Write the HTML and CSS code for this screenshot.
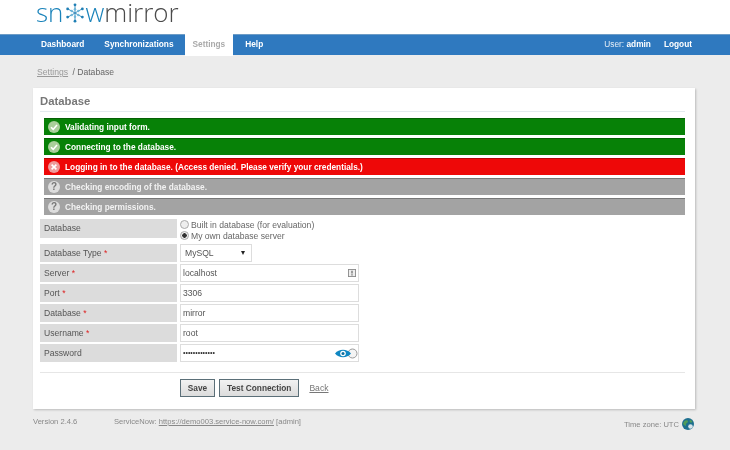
FILE: index.html
```html
<!DOCTYPE html>
<html lang="en">
<head>
<meta charset="utf-8">
<title>Snow Mirror - Database</title>
<link rel="stylesheet" href="styles.css">
</head>
<body>
<header class="brand">
  <div class="logo"><span class="logo-blue">sn</span><svg class="flake" width="18" height="20" viewBox="0 0 22 24"><g stroke="#2d86b8" stroke-width="1.1" fill="none"><path d="M11 1V23M1.5 6.5L20.5 17.5M20.5 6.5L1.5 17.5"/></g><g fill="#1f7fb5"><circle cx="11" cy="2" r="1.7"/><circle cx="11" cy="22" r="1.7"/><circle cx="2" cy="7" r="1.7"/><circle cx="20" cy="7" r="1.7"/><circle cx="2" cy="17" r="1.7"/><circle cx="20" cy="17" r="1.7"/></g><g fill="#6fb6d8"><circle cx="11" cy="7.5" r="1.5"/><circle cx="11" cy="16.5" r="1.5"/><circle cx="7" cy="9.5" r="1.5"/><circle cx="15" cy="9.5" r="1.5"/><circle cx="7" cy="14.5" r="1.5"/><circle cx="15" cy="14.5" r="1.5"/></g></svg><span class="logo-blue">w</span><span class="logo-grey">mirror</span></div>
</header>
<nav class="nav">
  <ul class="nav-left">
    <li><a class="nav-item">Dashboard</a></li>
    <li><a class="nav-item">Synchronizations</a></li>
    <li><a class="nav-item active">Settings</a></li>
    <li><a class="nav-item">Help</a></li>
  </ul>
  <div class="nav-right">
    <span class="user">User: <b>admin</b></span>
    <a class="logout">Logout</a>
  </div>
</nav>
<div class="breadcrumb"><a class="crumb-link">Settings</a> / Database</div>
<main class="card">
  <h1 class="title">Database</h1>
  <div class="statuses">
    <div class="status ok"><svg class="s-icon" width="12" height="12" viewBox="0 0 12 12"><circle cx="6" cy="6" r="6" fill="#a9cf9a"/><path d="M3 6.2L5.2 8.4L9 3.9" stroke="#fff" stroke-width="1.6" fill="none"/></svg>Validating input form.</div>
    <div class="status ok"><svg class="s-icon" width="12" height="12" viewBox="0 0 12 12"><circle cx="6" cy="6" r="6" fill="#a9cf9a"/><path d="M3 6.2L5.2 8.4L9 3.9" stroke="#fff" stroke-width="1.6" fill="none"/></svg>Connecting to the database.</div>
    <div class="status err"><svg class="s-icon" width="12" height="12" viewBox="0 0 12 12"><circle cx="6" cy="6" r="6" fill="#ef9a9a"/><path d="M3.6 3.6L8.4 8.4M8.4 3.6L3.6 8.4" stroke="#fff" stroke-width="1.6" fill="none"/></svg>Logging in to the database. (Access denied. Please verify your credentials.)</div>
    <div class="status pend"><span class="q-icon">?</span>Checking encoding of the database.</div>
    <div class="status pend"><span class="q-icon">?</span>Checking permissions.</div>
  </div>
  <form class="form">
    <div class="row row-radio">
      <div class="label">Database</div>
      <div class="radios">
        <label class="radio"><span class="dot"></span>Built in database (for evaluation)</label>
        <label class="radio"><span class="dot on"></span>My own database server</label>
      </div>
    </div>
    <div class="row">
      <div class="label">Database Type <i>*</i></div>
      <div class="select">MySQL<span class="caret"></span></div>
    </div>
    <div class="row">
      <div class="label">Server <i>*</i></div>
      <div class="input">localhost<svg class="info" width="8" height="8" viewBox="0 0 9 9"><rect x=".5" y=".5" width="8" height="8" fill="#eee" stroke="#888"/><path d="M4.5 2V5.2M4.5 6V7.2" stroke="#555" stroke-width="1.2"/></svg></div>
    </div>
    <div class="row">
      <div class="label">Port <i>*</i></div>
      <div class="input">3306</div>
    </div>
    <div class="row">
      <div class="label">Database <i>*</i></div>
      <div class="input">mirror</div>
    </div>
    <div class="row">
      <div class="label">Username <i>*</i></div>
      <div class="input">root</div>
    </div>
    <div class="row">
      <div class="label">Password</div>
      <div class="input pass">•••••••••••••<svg class="eye" width="23" height="11" viewBox="0 0 23 11"><circle cx="17.5" cy="5.5" r="4.5" fill="#f4f4f4" stroke="#999"/><path d="M0 5.5C4 .5 12 .5 16 5.5C12 10.5 4 10.5 0 5.5Z" fill="#0f87c2"/><circle cx="8" cy="5.5" r="2.8" fill="#fff"/><circle cx="8" cy="5.5" r="1.5" fill="#0f6f9f"/></svg></div>
    </div>
    <div class="actions">
      <button type="button" class="btn btn-save">Save</button>
      <button type="button" class="btn">Test Connection</button>
      <a class="back">Back</a>
    </div>
  </form>
</main>
<footer class="footer">
  <span class="version">Version 2.4.6</span>
  <span class="instance">ServiceNow: <a class="inst-link">https://demo003.service-now.com/</a> [admin]</span>
  <span class="tz">Time zone: UTC<svg class="globe" width="12" height="12" viewBox="0 0 12 12"><circle cx="6" cy="6" r="6" fill="#1d6f8f"/><path d="M2 3.5C4 1.5 6 2 6 3.5S3.5 5 4 7S2 7 1 6ZM8 1.5L10.5 3.5L9 5L7.5 3.5Z" fill="#4f9c5a"/><circle cx="8.5" cy="8.5" r="2.3" fill="#d8e4ea"/></svg></span>
</footer>
</body>
</html>
```

FILE: styles.css
```css
* { box-sizing: border-box; }
html, body { margin: 0; padding: 0; }
body {
  width: 730px;
  height: 450px;
  overflow: hidden;
  background: #ececec;
  font-family: "Liberation Sans", Arial, sans-serif;
  font-size: 8.6px;
  color: #555;
  filter: blur(.3px);
}
.brand { height: 34px; background: #fff; padding-left: 36px; }
.logo {
  display: flex;
  align-items: center;
  height: 24px;
  font-family: "Open Sans", sans-serif;
  font-weight: 300;
  font-size: 26px;
  line-height: 24px;
}
.logo-blue { color: #1a83ba; }
.logo-grey { color: #4a4a4a; }
.flake { margin: 2px 1px 0 3px; flex: none; }
.nav {
  height: 21px;
  background: #2f79bf;
  border-top: 1px solid #6d9cc6;
  display: flex;
  justify-content: space-between;
  color: #fff;
  font-weight: bold;
}
.nav-left { display: flex; list-style: none; margin: 0; padding: 0 0 0 31px; }
.nav-item {
  display: block;
  height: 21px;
  line-height: 20px;
  margin-top: -1px;
  padding: 0 10px;
  font-size: 8.3px;
}
.active { background: #fff; color: #aaa; padding: 0 8px 0 8px; height: 22px; margin-left: 1px; margin-right: 2px; }
.nav-right { display: flex; gap: 13px; padding-right: 38px; line-height: 20px; margin-top: -1px; font-size: 8.3px; }
.user { font-weight: normal; color: #e6eef6; }
.user b { color: #fff; }
.breadcrumb { padding: 11px 0 0 37px; height: 33px; line-height: 12px; font-size: 8.6px; color: #666; }
.crumb-link { color: #999; text-decoration: underline; margin-right: 2px; }
.card {
  width: 662px;
  height: 321px;
  margin-left: 33px;
  background: #fff;
  box-shadow: 1px 1px 2px #bbb;
  padding: 7px 10px 0 7px;
}
.title {
  margin: 0;
  height: 17px;
  font-size: 11.3px;
  line-height: 12px;
  font-weight: bold;
  color: #777;
  border-bottom: 1px solid #e3eaee;
}
.statuses { display: flex; flex-direction: column; gap: 3px; padding: 6px 0 0 4px; }
.status {
  display: flex;
  align-items: center;
  width: 641px;
  height: 17px;
  padding-left: 4px;
  color: #fff;
  font-weight: bold;
  font-size: 8.3px;
  border-top: 1px solid rgba(0,0,0,.25);
}
.ok { background: #078107; }
.err { background: #ee0808; }
.pend { background: #a3a3a3; border-top-color: #777; color: #f2f2f2; }
.s-icon { flex: none; margin-right: 5px; }
.q-icon {
  flex: none;
  width: 12px;
  height: 12px;
  margin-right: 5px;
  border-radius: 50%;
  background: #ddd;
  color: #777;
  font-size: 10px;
  line-height: 12px;
  text-align: center;
}
.form { display: flex; flex-direction: column; gap: 2px; padding-top: 3px; }
.row { display: flex; gap: 3px; height: 18px; }
.row-radio { height: 23px; gap: 3px; margin-bottom: 1px; }
.label {
  width: 137px;
  height: 18px;
  padding-left: 4px;
  background: #dcdcdc;
  line-height: 18px;
  color: #555;
}
.row-radio .label { height: 19px; margin-top: 1px; }
.label i { color: #d22; font-style: normal; }
.radios { display: flex; flex-direction: column; margin-top: 1px; }
.radio { display: flex; align-items: center; height: 12px; color: #666; }
.dot {
  width: 9px;
  height: 9px;
  margin-right: 2px;
  border: 1px solid #aaa;
  border-radius: 50%;
  background: #eee;
}
.dot.on { background: radial-gradient(circle, #333 0 2px, #eee 2.5px); }
.select {
  position: relative;
  width: 72px;
  height: 18px;
  padding-left: 4px;
  line-height: 16px;
  border: 1px solid #ddd;
  color: #555;
}
.caret {
  position: absolute;
  right: 6px;
  top: 6px;
  border: 2.5px solid transparent;
  border-top: 4px solid #222;
  border-bottom: 0;
}
.input {
  position: relative;
  width: 179px;
  height: 18px;
  padding-left: 2px;
  line-height: 16px;
  border: 1px solid #ddd;
  color: #555;
}
.pass { font-size: 7px; color: #333; }
.info { position: absolute; right: 2px; top: 4px; }
.eye { position: absolute; right: 0; top: 3px; }
.actions {
  display: flex;
  align-items: flex-start;
  height: 31px;
  margin-top: 8px;
  padding: 6px 0 0 140px;
  border-top: 1px solid #e6e6e6;
}
.btn {
  height: 18px;
  margin: 0 4px 0 0;
  padding: 0 7px;
  background: linear-gradient(#f2f2f2, #dcdcdc);
  border: 1px solid #5b6f78;
  font-family: inherit;
  font-size: 8.3px;
  font-weight: bold;
  color: #444;
}
.btn-save { width: 35px; padding: 0; }
.back { margin: 4px 0 0 6px; color: #777; text-decoration: underline; }
.footer { position: relative; display: flex; padding: 8px 0 0 33px; color: #888; font-size: 7.6px; }
.version { width: 81px; }
.inst-link { color: #888; text-decoration: underline; }
.tz {
  position: absolute;
  left: 624px;
  top: 9px;
  display: flex;
  align-items: center;
  gap: 3px;
}
```
